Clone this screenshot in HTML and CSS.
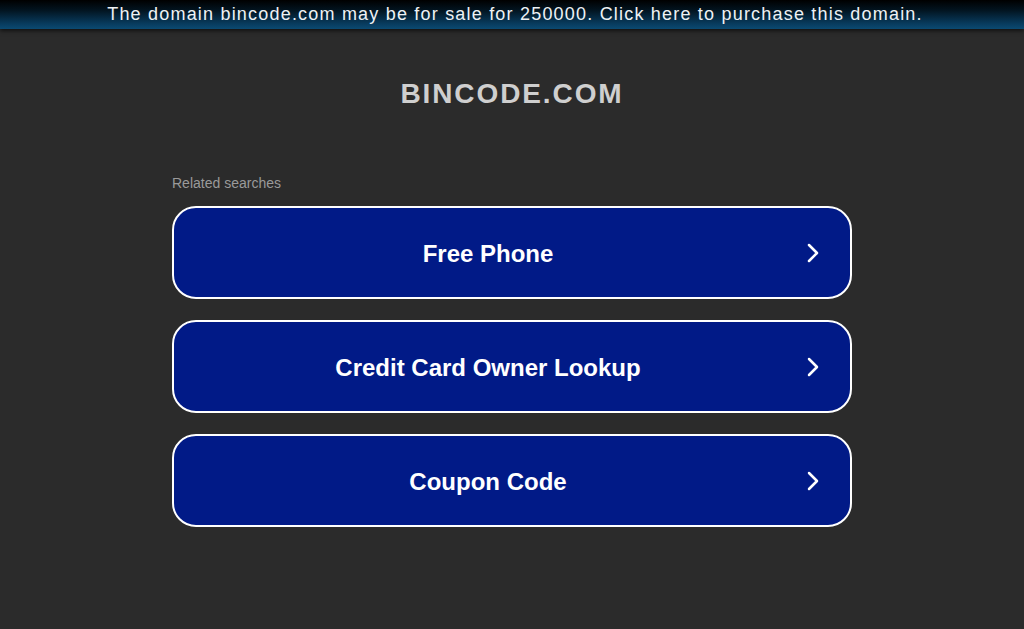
FILE: index.html
```html
<!DOCTYPE html>
<html>
<head>
<meta charset="utf-8">
<title>bincode.com</title>
<link rel="stylesheet" href="styles.css">
</head>
<body>
  <div class="sale-banner">The domain bincode.com may be for sale for 250000. Click here to purchase this domain.</div>

  <div class="content">
    <h1 class="domain">BINCODE.COM</h1>

    <div class="searches">
      <div class="searches-title">Related searches</div>

      <a class="search-link" href="#">
        <span class="search-text">Free Phone</span>
        <svg class="chevron" viewBox="0 0 14 20" width="14" height="20"><path d="M4 2 L12 10 L4 18" fill="none" stroke="#fff" stroke-width="2.5" stroke-linecap="round" stroke-linejoin="round"/></svg>
      </a>
      <a class="search-link" href="#">
        <span class="search-text">Credit Card Owner Lookup</span>
        <svg class="chevron" viewBox="0 0 14 20" width="14" height="20"><path d="M4 2 L12 10 L4 18" fill="none" stroke="#fff" stroke-width="2.5" stroke-linecap="round" stroke-linejoin="round"/></svg>
      </a>
      <a class="search-link" href="#">
        <span class="search-text">Coupon Code</span>
        <svg class="chevron" viewBox="0 0 14 20" width="14" height="20"><path d="M4 2 L12 10 L4 18" fill="none" stroke="#fff" stroke-width="2.5" stroke-linecap="round" stroke-linejoin="round"/></svg>
      </a>
    </div>
  </div>
</body>
</html>
```

FILE: styles.css
```css
html {
  height: 100%;
}
body {
  margin: 0;
  height: 100%;
  background: #2b2b2b;
  font-family: "Liberation Sans", Arial, Helvetica, sans-serif;
  color: white;
}
.sale-banner {
  height: 29px;
  line-height: 28px;
  padding-left: 6px;
  text-align: center;
  font-size: 18px;
  letter-spacing: 1.2px;
  color: #eef2f5;
  background: linear-gradient(to bottom, #000000 0%, #021420 35%, #083a5c 80%, #0b4a72 100%);
  box-shadow: 0 2px 4px rgba(0, 0, 0, 0.6);
}
.content {
  width: 680px;
  margin: 0 auto;
}
.domain {
  margin: 49px 0 0 0;
  text-align: center;
  font-size: 28px;
  line-height: 32px;
  letter-spacing: 1.9px;
  color: #cfcfcf;
}
.searches {
  margin-top: 65px;
  display: flex;
  flex-direction: column;
  gap: 21px;
}
.searches-title {
  font-size: 14px;
  color: #9a9a9a;
  margin-bottom: -6px;
}
.search-link {
  display: flex;
  align-items: center;
  height: 89px;
  border: 2px solid #fff;
  border-radius: 24px;
  background: #011a87;
  color: #fff;
  text-decoration: none;
}
.search-text {
  flex: 1;
  text-align: center;
  padding: 2px 0 0 23px;
  font-size: 24px;
  font-weight: bold;
}
.chevron {
  margin: 0 31px 0 26px;
}
```
